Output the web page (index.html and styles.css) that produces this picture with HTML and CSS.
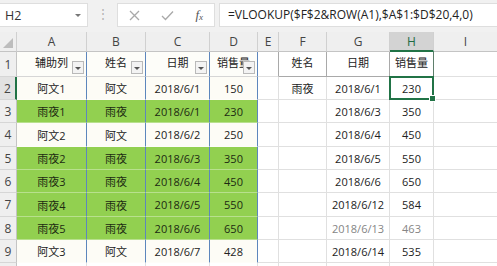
FILE: index.html
```html
<!DOCTYPE html>
<html lang="zh-CN">

<head>
    <meta charset="UTF-8">
    <meta name="viewport" content="width=device-width, initial-scale=1.0">
    <title>VLOOKUP 辅助列</title>
    <link rel="stylesheet" href="styles.css">
</head>

<body>
    <div class="topbar">
        <div class="namebox"><span>H2</span><span class="caret"></span></div>
        <div class="grip">⋮</div>
        <div class="fxbox">
            <svg class="ico" width="11" height="11" viewBox="0 0 11 11">
                <path d="M1 1 L10 10 M10 1 L1 10" stroke="#a9a9a9" stroke-width="1.3" fill="none" />
            </svg>
            <svg class="ico" width="13" height="11" viewBox="0 0 13 11">
                <path d="M1 6 L4.5 9.5 L12 1.5" stroke="#a9a9a9" stroke-width="1.3" fill="none" />
            </svg>
            <span class="fx"><i>f</i><sub>x</sub></span>
        </div>
        <div class="formula">=VLOOKUP($F$2&amp;ROW(A1),$A$1:$D$20,4,0)</div>
    </div>

    <div class="sheet">
        <!-- column headers -->
        <div class="hd corner"><span class="tri"></span></div>
        <div class="hd">A</div>
        <div class="hd">B</div>
        <div class="hd">C</div>
        <div class="hd">D</div>
        <div class="hd">E</div>
        <div class="hd">F</div>
        <div class="hd">G</div>
        <div class="hd active">H</div>
        <div class="hd last">I</div>

        <!-- row 1 -->
        <div class="rh">1</div>
        <div class="c t th">辅助列<span class="flt"></span></div>
        <div class="c t th">姓名<span class="flt"></span></div>
        <div class="c t th">日期<span class="flt"></span></div>
        <div class="c t th">销售量<span class="flt"></span></div>
        <div class="c bx-l"></div>
        <div class="c bx">姓名</div>
        <div class="c bx">日期</div>
        <div class="c bx bx-h">销售量</div>
        <div class="c last"></div>

        <!-- row 2 -->
        <div class="rh on">2</div>
        <div class="c t w">阿文1</div>
        <div class="c t w">阿文</div>
        <div class="c t w">2018/6/1</div>
        <div class="c t w">150</div>
        <div class="c"></div>
        <div class="c">雨夜</div>
        <div class="c">2018/6/1</div>
        <div class="c sel">230</div>
        <div class="c last"></div>

        <!-- row 3 -->
        <div class="rh">3</div>
        <div class="c t g">雨夜1</div>
        <div class="c t g">雨夜</div>
        <div class="c t g">2018/6/1</div>
        <div class="c t g">230</div>
        <div class="c"></div>
        <div class="c"></div>
        <div class="c">2018/6/3</div>
        <div class="c">350</div>
        <div class="c last"></div>

        <!-- row 4 -->
        <div class="rh">4</div>
        <div class="c t w">阿文2</div>
        <div class="c t w">阿文</div>
        <div class="c t w">2018/6/2</div>
        <div class="c t w">250</div>
        <div class="c"></div>
        <div class="c"></div>
        <div class="c">2018/6/4</div>
        <div class="c">450</div>
        <div class="c last"></div>

        <!-- row 5 -->
        <div class="rh">5</div>
        <div class="c t g">雨夜2</div>
        <div class="c t g">雨夜</div>
        <div class="c t g">2018/6/3</div>
        <div class="c t g">350</div>
        <div class="c"></div>
        <div class="c"></div>
        <div class="c">2018/6/5</div>
        <div class="c">550</div>
        <div class="c last"></div>

        <!-- row 6 -->
        <div class="rh">6</div>
        <div class="c t g">雨夜3</div>
        <div class="c t g">雨夜</div>
        <div class="c t g">2018/6/4</div>
        <div class="c t g">450</div>
        <div class="c"></div>
        <div class="c"></div>
        <div class="c">2018/6/6</div>
        <div class="c">650</div>
        <div class="c last"></div>

        <!-- row 7 -->
        <div class="rh">7</div>
        <div class="c t g">雨夜4</div>
        <div class="c t g">雨夜</div>
        <div class="c t g">2018/6/5</div>
        <div class="c t g">550</div>
        <div class="c"></div>
        <div class="c"></div>
        <div class="c">2018/6/12</div>
        <div class="c">584</div>
        <div class="c last"></div>

        <!-- row 8 -->
        <div class="rh">8</div>
        <div class="c t g">雨夜5</div>
        <div class="c t g">雨夜</div>
        <div class="c t g">2018/6/6</div>
        <div class="c t g">650</div>
        <div class="c"></div>
        <div class="c"></div>
        <div class="c faded">2018/6/13</div>
        <div class="c faded">463</div>
        <div class="c last"></div>

        <!-- row 9 -->
        <div class="rh">9</div>
        <div class="c t w">阿文3</div>
        <div class="c t w">阿文</div>
        <div class="c t w">2018/6/7</div>
        <div class="c t w">428</div>
        <div class="c"></div>
        <div class="c"></div>
        <div class="c">2018/6/14</div>
        <div class="c">535</div>
        <div class="c last"></div>

        <!-- row 10, only its top edge shows -->
        <div class="rh"></div>
        <div class="c"></div>
        <div class="c"></div>
        <div class="c"></div>
        <div class="c"></div>
        <div class="c"></div>
        <div class="c"></div>
        <div class="c"></div>
        <div class="c"></div>
        <div class="c last"></div>
    </div>
</body>

</html>
```

FILE: styles.css
```css
* {
    margin: 0;
    padding: 0;
    box-sizing: border-box;
}

body {
    width: 497px;
    height: 266px;
    overflow: hidden;
    background: #ffffff;
    color: #222222;
    font-family: 'Open Sans', 'Noto Sans CJK SC', sans-serif;
    font-size: 11px;
}

/* formula bar */
.topbar {
    display: flex;
    align-items: flex-start;
    height: 32px;
    padding-top: 3px;
    background: #f1f1f1;
}

.namebox {
    width: 88px;
    height: 24px;
    display: flex;
    align-items: center;
    justify-content: space-between;
    padding: 0 6px 0 5px;
    background: #ffffff;
    border: 1px solid #dedede;
    border-left: none;
    font-size: 12.5px;
    color: #333333;
}

.caret {
    width: 0;
    height: 0;
    border-left: 3px solid transparent;
    border-right: 3px solid transparent;
    border-top: 3px solid #777777;
}

.grip {
    width: 29px;
    line-height: 22px;
    text-align: center;
    color: #b0b0b0;
    font-size: 12px;
}

.fxbox {
    width: 98px;
    height: 24px;
    display: flex;
    align-items: center;
    justify-content: space-between;
    padding: 0 11px 0 11px;
    background: #ffffff;
    border: 1px solid #dedede;
}

.fx {
    font-family: 'Liberation Serif', serif;
    font-size: 13px;
    color: #555555;
    line-height: 1;
}

.fx sub {
    font-size: 9px;
    vertical-align: -1px;
    font-style: italic;
}

.formula {
    flex: 1;
    height: 24px;
    margin-left: 4px;
    padding-left: 8px;
    line-height: 22px;
    background: #ffffff;
    border: 1px solid #dedede;
    border-right: none;
    font-size: 12px;
    color: #222222;
    white-space: nowrap;
    overflow: hidden;
}

/* grid */
.sheet {
    display: grid;
    grid-template-columns: 17px 70px 59px 64px 48px 21px 48px 63px 44px 1fr;
    grid-template-rows: 20px 25px 23px 23px 24px 23px 23px 24px 23px 23px 23px;
}

.hd {
    display: flex;
    align-items: center;
    justify-content: center;
    background: #efefef;
    color: #444444;
    font-size: 12px;
    border-right: 1px solid #d0d0d0;
    border-bottom: 1px solid #c4c4c4;
}

.hd.active {
    background: #d3d3d3;
    color: #1f6b43;
    border-bottom: 2px solid #217346;
}

.corner {
    position: relative;
}

.tri {
    position: absolute;
    right: 3px;
    bottom: 3px;
    width: 0;
    height: 0;
    border-left: 10px solid transparent;
    border-bottom: 10px solid #bdbdbd;
}

.rh {
    display: flex;
    align-items: center;
    justify-content: center;
    background: #efefef;
    color: #444444;
    font-size: 12px;
    border-right: 1px solid #c4c4c4;
    border-bottom: 1px solid #d6d6d6;
}

.rh.on {
    border-right: 2px solid #217346;
    background: #e2e2e2;
}

.c {
    display: flex;
    align-items: center;
    justify-content: center;
    white-space: nowrap;
    overflow: hidden;
    border-right: 1px solid #e0e0e0;
    border-bottom: 1px solid #e0e0e0;
}

.last {
    border-right: none;
}

/* source table A:D */
.t {
    border-right: 1px solid #5d86bd;
    border-bottom: 1px solid rgba(255, 255, 255, 0.35);
}

.th {
    position: relative;
    background: #fdfdf9;
    border-bottom: 1px solid #d6d6d6;
    padding-bottom: 4px;
}

.flt {
    position: absolute;
    right: 2px;
    top: 9px;
    width: 12px;
    height: 13px;
    background: #f3f3f3;
    border: 1px solid #b9b9b9;
}

.flt::after {
    content: '';
    position: absolute;
    left: 2px;
    top: 5px;
    border-left: 3px solid transparent;
    border-right: 3px solid transparent;
    border-top: 3px solid #555555;
}

.w {
    background: #fdfcf6;
}

.g {
    background: #92d050;
    color: #1c2a12;
}

/* result table F:H */
.bx-l {
    border-right: 1px solid #a9a9a9;
}

.bx {
    border-right: 1px solid #a9a9a9;
    border-bottom: 1px solid #a9a9a9;
    padding-bottom: 4px;
}

.bx-h {
    border-right: 1px solid #5f7f6c;
    border-left: none;
}

.sel {
    position: relative;
    overflow: visible;
}

.sel::before {
    content: '';
    position: absolute;
    left: -1px;
    top: -1px;
    right: -1px;
    bottom: -1px;
    border: 2px solid #217346;
}

.sel::after {
    content: '';
    position: absolute;
    right: -3px;
    bottom: -3px;
    width: 5px;
    height: 5px;
    background: #217346;
    border: 1px solid #ffffff;
}

.faded {
    color: #858585;
}
```
